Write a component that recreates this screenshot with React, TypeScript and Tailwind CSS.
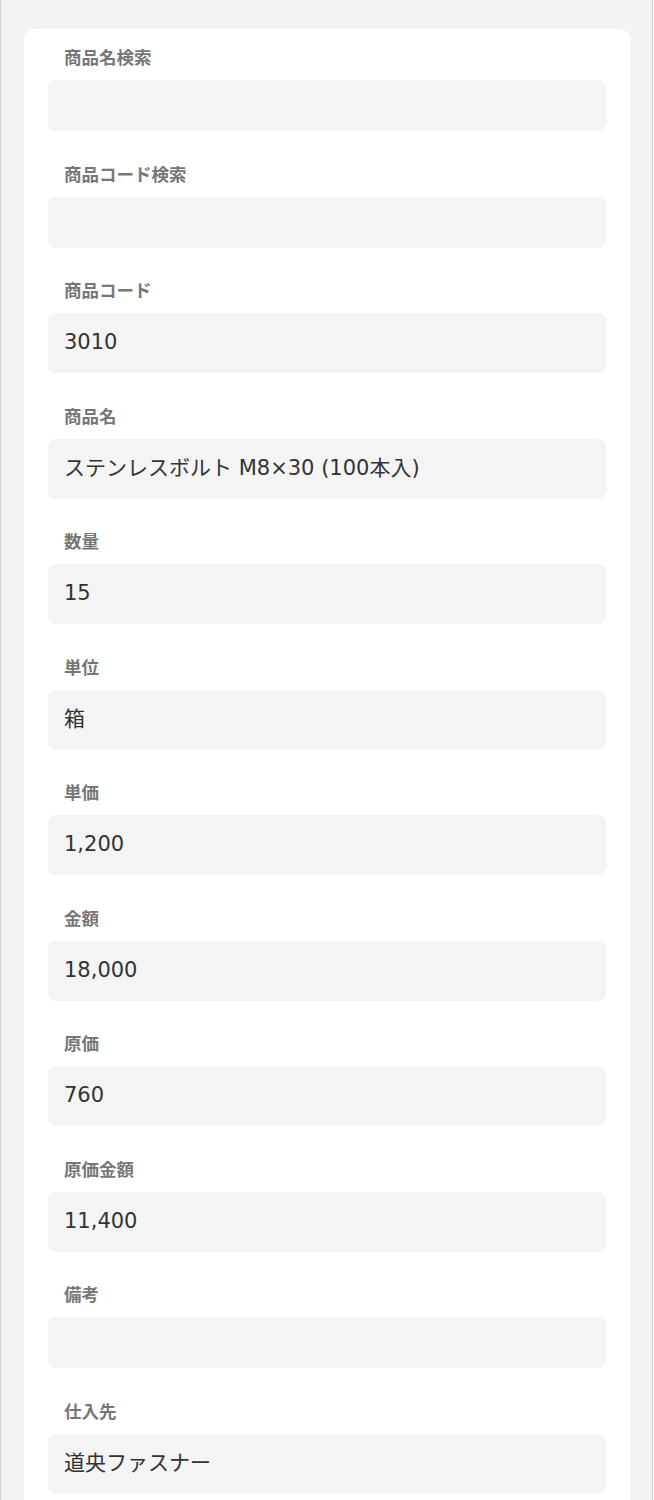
import React from 'react';

type Field = { label: string; value?: string };

const fields: Field[] = [
  { label: '商品名検索' },
  { label: '商品コード検索' },
  { label: '商品コード', value: '3010' },
  { label: '商品名', value: 'ステンレスボルト M8×30 (100本入)' },
  { label: '数量', value: '15' },
  { label: '単位', value: '箱' },
  { label: '単価', value: '1,200' },
  { label: '金額', value: '18,000' },
  { label: '原価', value: '760' },
  { label: '原価金額', value: '11,400' },
  { label: '備考' },
  { label: '仕入先', value: '道央ファスナー' },
];

export default function App() {
  return (
    <div
      className="w-[653px] min-h-screen border-x border-[#cfcfcf] bg-[#f3f3f3] pl-[23px] pt-[29px]"
      style={{ fontFamily: '"Noto Sans CJK JP", sans-serif' }}
    >
      {/* Form card */}
      <div className="w-[606px] rounded-[10px] bg-white px-6 pt-4 pb-10">
        <div className="flex flex-col gap-[30.5px]">
          {fields.map((f) => (
            <div key={f.label}>
              <div className="mb-[11px] h-6 pl-4 text-[17.5px] font-bold leading-6 text-[#777777]">
                {f.label}
              </div>
              {f.value ? (
                <div
                  className="flex h-[60px] items-center rounded-[8px] bg-[#f4f4f4] px-4 text-[21px] text-[#333333]"
                  style={{ fontFamily: '"DejaVu Sans", "Noto Sans CJK JP", sans-serif' }}
                >
                  {f.value}
                </div>
              ) : (
                <div className="h-[51px] rounded-[8px] bg-[#f4f4f4]" />
              )}
            </div>
          ))}
        </div>
      </div>
    </div>
  );
}
